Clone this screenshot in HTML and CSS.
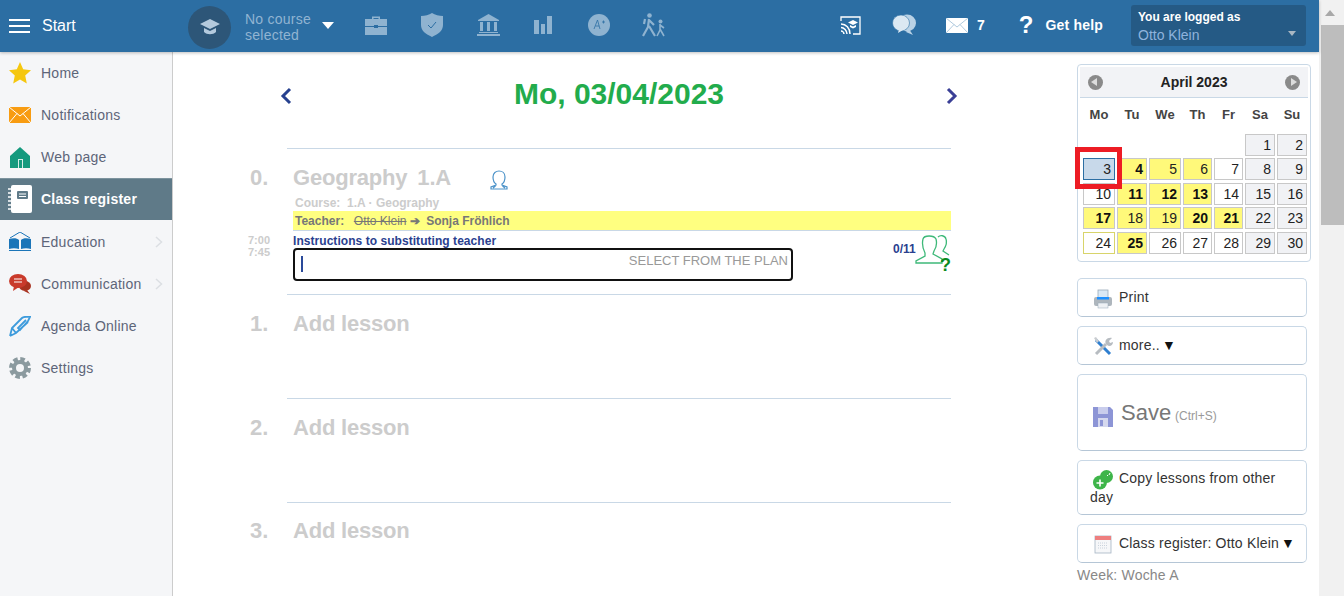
FILE: index.html

```html
<!DOCTYPE html>
<html lang="en">
<head>
  <meta charset="UTF-8">
  <title>Class register</title>
  <link rel="stylesheet" href="styles.css">
</head>
<body>

  <div class="page">
    <header class="topbar">
      <div class="menu-btn"><span></span><span></span><span></span></div>
      <div class="start">Start</div>

      <div class="course-logo">
        <svg width="20" height="18" viewBox="0 0 20 18"><path d="M10 1 20 6 10 11 0 6z" fill="#b4cadd"/><path d="M4 10v4c3 3 9 3 12 0v-4l-6 3z" fill="#b4cadd"/></svg>
      </div>
      <div class="course-name">No course<br>selected</div>
      <div class="caret-white"></div>

      <div class="top-icons">
        <svg width="22" height="21" viewBox="0 0 22 21"><path d="M7 4V1.500h8V4h-1.500V3h-5v1z" fill="#8fb3d0"/><path d="M0 4h22v7H13v-1H9v1H0z" fill="#8fb3d0"/><path d="M0 12h9v1h4v-1h9v8H0z" fill="#8fb3d0"/></svg>
        <svg width="22" height="24" viewBox="0 0 22 24"><path d="M11 0c3 2 7 3 11 3v9c0 6-5 9-11 12C5 21 0 18 0 12V3c4 0 8-1 11-3z" fill="#8fb3d0"/><path d="M7 12l3 3 5-6" fill="none" stroke="#2c6ea3" stroke-width="1"/></svg>
        <svg width="23" height="22" viewBox="0 0 23 22"><path d="M11.500 0 22 6v1H1V6z" fill="#8fb3d0"/><path d="M3 8h3v9H3zM10 8h3v9h-3zM17 8h3v9h-3z" fill="#8fb3d0"/><path d="M2 18h19v1H2zM0 20h23v2H0z" fill="#8fb3d0"/></svg>
        <svg width="18" height="18" viewBox="0 0 18 18"><path d="M0 4h5v14H0zM7 8h4v10H7zM13 0h5v18h-5z" fill="#8fb3d0"/></svg>
        <svg class="grade-icon" width="22" height="22" viewBox="0 0 22 22"><circle cx="11" cy="11" r="11" fill="#8fb3d0"/><path d="M6 15 9.500 6 12 15M7.500 12h3.500M14 8h3M15.500 6.500v3" fill="none" stroke="#2c6ea3" stroke-width="0.800"/></svg>
        <svg width="24" height="24" viewBox="0 0 24 24"><circle cx="7.500" cy="2.500" r="2.300" fill="#8fb3d0"/><circle cx="18.500" cy="8.500" r="2" fill="#8fb3d0"/><path d="M7 6 6 14 1 23M7 13l6 10M7 7l5 5M3 6 2 11" fill="none" stroke="#8fb3d0" stroke-width="2.200"/><path d="M18 11v6l-3 6M18 16l4 7M18 12l4 3" fill="none" stroke="#8fb3d0" stroke-width="1.600"/></svg>
      </div>

      <div class="top-right">
        <svg class="cast" width="21" height="19" viewBox="0 0 21 19"><path d="M1 5V1h19v17h-7" fill="none" stroke="#fff" stroke-width="1.300"/><path d="M1 8c5 0 9 4 9 10M1 11.500c3 0 6 3 6 6.500M1 15c1.500 0 3 1.500 3 3" fill="none" stroke="#fff" stroke-width="1.500"/><path d="M13 4 18 6.500 13 9 8 6.500zM10 9 13 10.500 16 9v2l-3 1.500-3-1.500z" fill="#fff"/></svg>
        <svg class="chat" width="24" height="22" viewBox="0 0 24 22"><ellipse cx="15" cy="9" rx="9" ry="8.500" fill="#b9d2e6"/><path d="M17 15l4 6-7-3z" fill="#b9d2e6"/><ellipse cx="9" cy="9" rx="8.500" ry="8" fill="#dbe8f2" stroke="#2c6ea3" stroke-width="0.600"/><path d="M7 15l-1 4 5-3z" fill="#dbe8f2"/></svg>
        <svg class="mail" width="22" height="15" viewBox="0 0 22 15"><rect width="22" height="15" fill="#fff"/><path d="M0 0 11 9 22 0M0 15 8 6.500M22 15 14 6.500" fill="none" stroke="#9cbcd6" stroke-width="0.800"/></svg>
        <span class="mail-count">7</span>
        <span class="help-mark">?</span>
        <span class="help-text">Get help</span>
      </div>

      <div class="user-box">
        <div class="user-label">You are logged as</div>
        <div class="user-name">Otto Klein</div>
        <div class="caret-grey"></div>
      </div>
    </header>

    <div class="main">
      <nav class="sidebar">
        <div class="nav-item">
          <svg width="22" height="22" viewBox="0 0 22 22"><path d="M11 0 14.200 7.300 22 8.200 16.200 13.500 17.800 21.500 11 17.400 4.200 21.500 5.800 13.500 0 8.200 7.800 7.300z" fill="#f5c70f"/></svg>
          Home
        </div>
        <div class="nav-item">
          <svg width="22" height="16" viewBox="0 0 22 16"><rect width="22" height="16" fill="#f89c12"/><path d="M0 0 11 9 22 0M0 16 8 6.500M22 16 14 6.500" fill="none" stroke="#fff" stroke-width="1"/></svg>
          Notifications
        </div>
        <div class="nav-item">
          <svg width="22" height="21" viewBox="0 0 22 21"><path d="M11 0 21 9v12H1V9z" fill="#149a7e"/><rect x="9" y="12" width="5" height="9" fill="#d7efe9"/><rect x="10" y="13" width="3" height="8" fill="#149a7e"/></svg>
          Web page
        </div>
        <div class="nav-item active">
          <svg width="24" height="28" viewBox="0 0 24 28"><rect x="3" y="0" width="21" height="28" rx="2" fill="#fff"/><path d="M0 4h5M0 8h5M0 12h5M0 16h5M0 20h5M0 24h5" stroke="#fff" stroke-width="1.400"/><rect x="9" y="6" width="11" height="8" rx="1" fill="#5f7a88"/><path d="M11 9h7M11 11.500h7" stroke="#fff" stroke-width="1"/></svg>
          Class register
        </div>
        <div class="nav-item">
          <svg width="22" height="20" viewBox="0 0 22 20"><path d="M1 6 11 0 21 6" fill="none" stroke="#1b75b8" stroke-width="1"/><path d="M0 7c4-1 8-1 10 1v9c-3-1-7-1-10 0zM22 7c-4-1-8-1-10 1v9c3-1 7-1 10 0z" fill="#1b75b8"/><path d="M0 18h22v1H0z" fill="#1b75b8"/></svg>
          Education
          <svg class="nav-arrow" width="8" height="12" viewBox="0 0 8 12"><path d="M1 1l5.500 5L1 11" fill="none" stroke="#dcdfe3" stroke-width="1.500"/></svg>
        </div>
        <div class="nav-item">
          <svg width="22" height="20" viewBox="0 0 22 20"><ellipse cx="16" cy="12" rx="6" ry="5" fill="#a8321f"/><path d="M18 16l3 4-6-3z" fill="#a8321f"/><ellipse cx="9" cy="7" rx="9" ry="7" fill="#c93a2b"/><path d="M5 12l-1 5 6-4z" fill="#c93a2b"/><path d="M5 5h8M5 8h8" stroke="#fff" stroke-width="1"/></svg>
          Communication
          <svg class="nav-arrow" width="8" height="12" viewBox="0 0 8 12"><path d="M1 1l5.500 5L1 11" fill="none" stroke="#dcdfe3" stroke-width="1.500"/></svg>
        </div>
        <div class="nav-item">
          <svg width="22" height="21" viewBox="0 0 22 21"><path d="M1 20 3 12 13 2c2-2 6-1 8-1l-2 4-8 9-2-2 8-8M1 20l6-3L19 6M7 17l-4-5" fill="none" stroke="#3d9bdc" stroke-width="1.800"/></svg>
          Agenda Online
        </div>
        <div class="nav-item">
          <svg width="22" height="22" viewBox="0 0 22 22"><circle cx="11" cy="11" r="9" fill="none" stroke="#8b9a9f" stroke-width="4" stroke-dasharray="4.500 2.570"/><circle cx="11" cy="11" r="6" fill="none" stroke="#8b9a9f" stroke-width="4"/></svg>
          Settings
        </div>
      </nav>

      <section class="content">
        <div class="date-row">
          <svg class="date-prev" width="13" height="18" viewBox="0 0 13 18"><path d="M10 2 3 9l7 7" fill="none" stroke="#27418f" stroke-width="3"/></svg>
          <h1 class="date-title">Mo, 03/04/2023</h1>
          <svg class="date-next" width="13" height="18" viewBox="0 0 13 18"><path d="M3 2l7 7-7 7" fill="none" stroke="#3a3f96" stroke-width="3"/></svg>
        </div>

        <div class="lesson lesson-filled">
          <div class="lesson-side">
            <div class="lesson-num">0.</div>
            <div class="lesson-time">7:00<br>7:45</div>
          </div>
          <div class="lesson-body">
            <div class="lesson-title">
              Geography <span class="lesson-class">1.A</span>
              <svg class="teacher-icon" width="18" height="20" viewBox="0 0 18 20"><path d="M6 14C3 12 3 9 3 7c0-4 3-6 6-6s6 2 6 6c0 2 0 5-3 7v1l5 2v2H1v-2l5-2zM5.500 16 3 18M12.500 16 15 18" fill="none" stroke="#4c93c9" stroke-width="1.200"/></svg>
            </div>
            <div class="course-line">Course:&nbsp; 1.A · Geography</div>
            <div class="teacher-bar">Teacher:&nbsp; <s class="old-teacher">Otto Klein</s> <span class="teacher-arrow">➔</span> Sonja Fröhlich</div>
            <div class="instructions-label">Instructions to substituting teacher</div>
            <div class="instructions-row">
              <div class="instructions-box">
                <span class="text-caret"></span>
                <span class="select-plan">SELECT FROM THE PLAN</span>
              </div>
              <div class="attendance">0/11</div>
              <div class="students">
                <svg width="35" height="32" viewBox="0 0 35 32"><path d="M23 3c2-2 7-2 8 2 1 3 0 7-2 10l-1 2 6 4" fill="none" stroke="#3eb979" stroke-width="1.300"/><path d="M8 5c1-4 11-4 13 0 1 4 0 9-2 12l-1 3 9 5v4H1v-2l9-5v-3C8 15 7 9 8 5z" fill="#fff" stroke="#3eb979" stroke-width="1.300"/></svg>
                <span class="students-q">?</span>
              </div>
            </div>
          </div>
        </div>

        <div class="lesson">
          <div class="lesson-side"><div class="lesson-num">1.</div></div>
          <div class="lesson-body"><div class="lesson-title">Add lesson</div></div>
        </div>
        <div class="lesson">
          <div class="lesson-side"><div class="lesson-num">2.</div></div>
          <div class="lesson-body"><div class="lesson-title">Add lesson</div></div>
        </div>
        <div class="lesson lesson-last">
          <div class="lesson-side"><div class="lesson-num">3.</div></div>
          <div class="lesson-body"><div class="lesson-title">Add lesson</div></div>
        </div>
      </section>

      <aside class="right-panel">
        <div class="calendar">
          <div class="cal-head">
            <span class="cal-nav cal-prev"></span>
            <span class="cal-month">April 2023</span>
            <span class="cal-nav cal-next"></span>
          </div>
          <div class="cal-grid">
            <div class="cal-dow">Mo</div><div class="cal-dow">Tu</div><div class="cal-dow">We</div><div class="cal-dow">Th</div><div class="cal-dow">Fr</div><div class="cal-dow">Sa</div><div class="cal-dow">Su</div>

            <div></div><div></div><div></div><div></div><div></div><div class="day off">1</div><div class="day off">2</div>

            <div class="day selected">3</div><div class="day has bold">4</div><div class="day has">5</div><div class="day has">6</div><div class="day">7</div><div class="day off">8</div><div class="day off">9</div>

            <div class="day">10</div><div class="day has bold">11</div><div class="day has bold">12</div><div class="day has bold">13</div><div class="day">14</div><div class="day off">15</div><div class="day off">16</div>

            <div class="day has bold">17</div><div class="day has">18</div><div class="day has">19</div><div class="day has bold">20</div><div class="day has bold">21</div><div class="day off">22</div><div class="day off">23</div>

            <div class="day today">24</div><div class="day has bold">25</div><div class="day">26</div><div class="day">27</div><div class="day">28</div><div class="day off">29</div><div class="day off">30</div>
          </div>
          <div class="cal-mark"></div>
        </div>

        <div class="side-btn">
          <svg width="20" height="20" viewBox="0 0 20 20"><rect x="5" y="1" width="10" height="8" fill="#dbe9f5" stroke="#9ab" stroke-width="0.800"/><rect x="1" y="8" width="18" height="9" rx="2" fill="#aeb6bd"/><rect x="4" y="8" width="12" height="2.500" fill="#1e90ff"/><rect x="5" y="14" width="10" height="5" fill="#eef1f4" stroke="#9ab" stroke-width="0.500"/></svg>Print
        </div>
        <div class="side-btn">
          <svg width="20" height="20" viewBox="0 0 20 20"><path d="M3 3 17 17" stroke="#2f7fd0" stroke-width="3"/><path d="M3 17 13 7" stroke="#b7bcc1" stroke-width="3"/><path d="M13 7c-2-3 1-7 6-6l-3 3 1 2 3-1c0 4-4 5-6 3z" fill="#b7bcc1"/><path d="M1 1 3 0 6 4 4 6z" fill="#c9cdd1"/></svg>more..<span class="btn-arrow">▼</span>
        </div>
        <div class="side-btn save-btn">
          <svg width="20" height="20" viewBox="0 0 20 20"><path d="M0 0h17l3 3v17H0z" fill="#8d95d6"/><rect x="5" y="0" width="10" height="7" fill="#c9cdec"/><rect x="5" y="11" width="10" height="9" fill="#d5d8ee"/><rect x="7" y="13" width="3" height="6" fill="#8d95d6"/></svg><span class="save-text">Save</span> <span class="save-key">(Ctrl+S)</span>
        </div>
        <div class="side-btn copy-btn">
          <svg width="20" height="20" viewBox="0 0 20 20"><circle cx="7" cy="12.500" r="7" fill="#3eb54a"/><circle cx="13.500" cy="6.500" r="6.500" fill="#3eb54a"/><path d="M3.500 13h7M7 9.500v7" stroke="#fff" stroke-width="1.600"/><path d="M14 5l1 1M17 3l-1 2" stroke="#fff" stroke-width="1"/></svg>Copy lessons from other day
        </div>
        <div class="side-btn register-btn">
          <svg width="20" height="20" viewBox="0 0 20 20"><rect x="2" y="1" width="16" height="17" fill="#f6f7f9" stroke="#a5b4c4" stroke-width="0.800"/><rect x="2" y="1" width="16" height="4" fill="#ee7f7f"/><path d="M5 8h10M5 10.500h10M5 13h10" stroke="#c9d2dc" stroke-width="1" stroke-dasharray="1 1"/></svg>Class register: Otto Klein<span class="btn-arrow">▼</span>
        </div>
        <div class="week-note">Week: Woche A</div>
      </aside>
    </div>
  </div>

  <div class="scrollbar">
    <div class="scroll-up"></div>
    <div class="scroll-thumb"></div>
  </div>

</body>
</html>
```

FILE: styles.css

```css
html, body {
  height: 100%;
}

body {
  margin: 0;
  display: flex;
  overflow: hidden;
  font-family: "Liberation Sans", Arial, sans-serif;
  background: #fff;
}

.page {
  flex: 1;
  min-width: 0;
  display: flex;
  flex-direction: column;
}

/* top bar */
.topbar {
  height: 52px;
  flex: none;
  display: flex;
  align-items: center;
  background: #2c6ea3;
  box-shadow: 0 1px 3px rgba(0,0,0,0.25);
  position: relative;
  z-index: 1;
}

.menu-btn {
  width: 21px;
  margin-left: 9px;
  display: flex;
  flex-direction: column;
  gap: 4px;
}

.menu-btn span {
  height: 2px;
  background: #fff;
}

.start {
  margin-left: 12px;
  width: 146px;
  font-size: 16px;
  color: #fff;
}

.course-logo {
  width: 43px;
  height: 43px;
  border-radius: 50%;
  background: #2d5678;
  display: flex;
  align-items: center;
  justify-content: center;
  margin-top: 2px;
}

.course-name {
  margin-left: 14px;
  width: 77px;
  font-size: 14px;
  line-height: 16px;
  letter-spacing: 0.25px;
  color: #91b4d2;
  margin-top: 2px;
}

.caret-white {
  width: 0;
  height: 0;
  border-left: 6px solid transparent;
  border-right: 6px solid transparent;
  border-top: 7px solid #fff;
  margin-top: -2px;
}

.top-icons {
  margin-left: 31px;
  display: flex;
  align-items: center;
  gap: 34px;
  margin-top: -2px;
}

.grade-icon {
  margin: 0 -2px 0 2px;
}

.top-right {
  margin-left: auto;
  display: flex;
  align-items: center;
  color: #fff;
  font-size: 14px;
  font-weight: bold;
  margin-top: -2px;
}

.chat {
  margin-left: 31px;
}

.mail {
  margin-left: 30px;
}

.mail-count {
  margin-left: 9px;
}

.help-mark {
  margin-left: 34px;
  font-size: 24px;
}

.help-text {
  margin-left: 12px;
  letter-spacing: 0.2px;
}

.user-box {
  position: relative;
  width: 175px;
  height: 41px;
  margin: 0 13px 1px 28px;
  padding: 5px 7px;
  box-sizing: border-box;
  background: #255a85;
  border-radius: 3px;
}

.user-label {
  font-size: 12px;
  line-height: 14px;
  font-weight: bold;
  color: #fff;
}

.user-name {
  margin-top: 3px;
  font-size: 14px;
  line-height: 16px;
  color: #8fb3dd;
}

.caret-grey {
  position: absolute;
  right: 10px;
  bottom: 10px;
  border-left: 4.5px solid transparent;
  border-right: 4.5px solid transparent;
  border-top: 5px solid #a9b7c3;
}

/* sidebar */
.main {
  flex: 1;
  min-height: 0;
  display: flex;
}

.sidebar {
  width: 172px;
  flex: none;
  background: #f5f6f8;
  border-right: 1px solid #ccc;
}

.nav-item {
  height: 42px;
  display: flex;
  align-items: center;
  gap: 10px;
  padding: 0 9px;
  box-sizing: border-box;
  font-size: 14px;
  letter-spacing: 0.25px;
  color: #5d6579;
}

.nav-item svg {
  flex: none;
}

.nav-item.active {
  background: #5f7a88;
  box-shadow: inset 0 1px 0 #7d939e;
  margin-bottom: 1px;
  color: #fff;
  font-weight: bold;
  padding-left: 8px;
  gap: 9px;
}

.nav-arrow {
  margin-left: auto;
}

/* lessons */
.content {
  flex: 1;
  min-width: 0;
  display: flex;
  flex-direction: column;
  align-items: center;
  padding-top: 25px;
}

.date-row {
  width: 680px;
  display: flex;
  justify-content: space-between;
  align-items: center;
  margin-bottom: 37px;
}

.date-prev {
  margin: 3px 0 0 1px;
}

.date-next {
  margin: 3px 1px 0 0;
}

.date-title {
  margin: 0;
  font-size: 30px;
  line-height: 34px;
  color: #22ac4c;
}

.lesson {
  width: 664px;
  height: 104px;
  flex: none;
  box-sizing: border-box;
  display: flex;
  border-top: 1px solid #c9d8e6;
}

.lesson-filled {
  height: 146px;
}

.lesson-side {
  width: 43px;
  margin-left: -37px;
  flex: none;
  padding-top: 16px;
}

.lesson-last .lesson-side,
.lesson-last .lesson-body {
  padding-top: 15px;
}

.lesson-num,
.lesson-title {
  font-size: 22px;
  line-height: 26px;
  font-weight: bold;
  color: #ccc;
}

.lesson-time {
  margin: 43px 0 0 -2px;
  font-size: 11px;
  line-height: 12px;
  font-weight: bold;
  color: #ccc;
}

.lesson-body {
  flex: 1;
  min-width: 0;
  padding-top: 16px;
}

.lesson-title {
  display: flex;
  align-items: center;
  letter-spacing: -0.2px;
}

.lesson-class {
  margin-left: 10px;
}

.teacher-icon {
  margin-left: 39px;
  margin-top: 3px;
}

.course-line {
  margin: 5px 0 1px 2px;
  font-size: 12px;
  line-height: 14px;
  font-weight: bold;
  color: #ccc;
}

.teacher-bar {
  height: 19px;
  padding-left: 2px;
  font-size: 12px;
  line-height: 21px;
  font-weight: bold;
  color: #777;
  background: #ffff80;
  border-bottom: 1px solid #c9d8e6;
}

.old-teacher {
  font-weight: normal;
  margin-left: 3px;
}

.teacher-arrow {
  letter-spacing: 3px;
}

.instructions-label {
  margin-top: 3px;
  font-size: 12px;
  line-height: 14px;
  letter-spacing: 0.05px;
  font-weight: bold;
  color: #2a3f8f;
}

.instructions-row {
  position: relative;
  display: flex;
}

.instructions-box {
  width: 500px;
  height: 33px;
  box-sizing: border-box;
  border: 2px solid #111;
  border-radius: 4px;
  display: flex;
  justify-content: space-between;
  padding: 3px 3px 0 6px;
  font-size: 13px;
  color: #999;
}

.text-caret {
  width: 2px;
  height: 16px;
  margin-top: 3px;
  background: #2a4a9a;
}

.select-plan {
  line-height: 16px;
}

.attendance {
  margin: -6px 0 0 100px;
  font-size: 12px;
  font-weight: bold;
  line-height: 14px;
  color: #2a3f8f;
}

.students {
  position: absolute;
  right: 1px;
  top: -14px;
  width: 35px;
  height: 32px;
}

.students-q {
  position: absolute;
  right: -1px;
  bottom: -9px;
  font-size: 18px;
  line-height: 20px;
  font-weight: bold;
  color: #0a8a1e;
}

/* right column */
.right-panel {
  width: 254px;
  flex: none;
  padding: 12px 0 0 12px;
  box-sizing: border-box;
  font-size: 14px;
  letter-spacing: 0.2px;
  color: #333;
}

.calendar {
  position: relative;
  width: 234px;
  height: 198px;
  box-sizing: border-box;
  border: 1px solid #c9d8e6;
  border-radius: 4px;
  padding: 2px 2px 0;
  margin-bottom: 16px;
  letter-spacing: 0;
}

.cal-head {
  height: 31px;
  box-sizing: border-box;
  display: flex;
  align-items: center;
  justify-content: space-between;
  padding: 0 8px;
  background: #f2f3f6;
  border-bottom: 1px solid #c9d8e6;
}

.cal-month {
  font-size: 14px;
  font-weight: bold;
  color: #222;
}

.cal-nav {
  position: relative;
  width: 15px;
  height: 15px;
  border-radius: 50%;
  background: #8a8a8a;
}

.cal-nav::after {
  content: "";
  position: absolute;
  top: 3px;
  border-top: 4.5px solid transparent;
  border-bottom: 4.5px solid transparent;
}

.cal-prev::after {
  left: 3px;
  border-right: 6px solid #ddd;
}

.cal-next::after {
  right: 3px;
  border-left: 6px solid #ddd;
}

.cal-grid {
  display: grid;
  grid-template-columns: 32px 30px 32px 29px 29px 30px 30px;
  grid-template-rows: 33px repeat(5, 22px);
  gap: 2.500px 2px;
  margin-left: 3px;
}

.cal-dow {
  font-size: 13px;
  font-weight: bold;
  line-height: 33px;
  text-align: center;
  color: #444;
}

.day {
  box-sizing: border-box;
  border: 1px solid #c8c8c8;
  padding-right: 3px;
  font-size: 14px;
  line-height: 20px;
  text-align: right;
  color: #222;
}

.day.off {
  background: #f1f2f5;
}

.day.has {
  background: #fff97a;
}

.day.bold {
  font-weight: bold;
  color: #111;
}

.day.selected {
  background: #c8d9ea;
  border-color: #2c6ea3;
}

.day.today {
  border-color: #d8d46a;
}

.cal-mark {
  position: absolute;
  left: -3px;
  top: 82px;
  width: 47px;
  height: 42px;
  box-sizing: border-box;
  border: 5px solid #ed1c24;
}

.side-btn {
  width: 230px;
  height: 39px;
  box-sizing: border-box;
  border: 1px solid #c9d8e6;
  border-bottom-color: #b5c6d6;
  border-radius: 5px;
  padding: 9px 12px;
  margin-bottom: 9px;
  line-height: 18px;
}

.copy-btn {
  height: 55px;
  padding: 8px 12px;
}

.register-btn {
  white-space: nowrap;
}

.side-btn svg {
  width: 20px;
  height: 20px;
  margin: -2px 6px -2px 3px;
  vertical-align: -5px;
}

.btn-arrow {
  margin-left: 2px;
  letter-spacing: 0;
  color: #111;
}

.save-btn {
  height: 77px;
  padding-top: 27px;
  line-height: 22px;
  letter-spacing: 0;
}

.save-btn svg {
  margin-right: 8px;
}

.save-text {
  font-size: 22px;
  color: #777;
}

.save-key {
  font-size: 12px;
  color: #999;
}

.week-note {
  margin-top: -6px;
  line-height: 18px;
  color: #888;
}

/* drawn scrollbar */
.scrollbar {
  width: 25px;
  flex: none;
  background: #f1f1f1;
  position: relative;
}

.scroll-up {
  position: absolute;
  left: 6px;
  top: 10px;
  border-left: 5.500px solid transparent;
  border-right: 5.500px solid transparent;
  border-bottom: 6px solid #a8a8a8;
}

.scroll-thumb {
  position: absolute;
  left: 2px;
  right: 0;
  top: 25px;
  height: 200px;
  background: #bdbdbd;
}
```
